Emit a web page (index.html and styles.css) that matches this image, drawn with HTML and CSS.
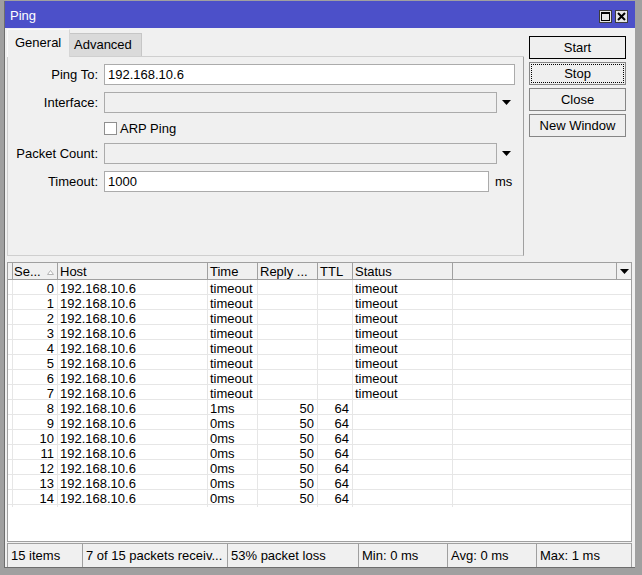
FILE: index.html
```html
<!DOCTYPE html>
<html>
<head>
<meta charset="utf-8">
<title>Ping</title>
<link rel="stylesheet" href="styles.css">
</head>
<body>
<div class="frame">
  <div class="win">
    <div class="titlebar">
      <span class="title">Ping</span>
      <div class="tbtns">
        <span class="tbtn"><svg width="9" height="9" viewBox="0 0 9 9"><rect x="0.5" y="0.5" width="8" height="8" fill="none" stroke="#000"/><rect x="0" y="0" width="9" height="2" fill="#000"/></svg></span>
        <span class="tbtn"><svg width="9" height="9" viewBox="0 0 9 9"><path d="M1 1L8 8M8 1L1 8" stroke="#000" stroke-width="2"/></svg></span>
      </div>
    </div>
    <div class="main">
      <div class="top">
        <div class="tabsarea">
          <div class="tabs">
            <div class="tab active">General</div>
            <div class="tab adv">Advanced</div>
          </div>
          <div class="panel">
            <div class="form">
              <div class="lbl">Ping To:</div>
              <div class="field"><div class="input full">192.168.10.6</div></div>

              <div class="lbl">Interface:</div>
              <div class="field"><div class="input dis"></div><span class="arrow"><svg width="9" height="5" viewBox="0 0 9 5"><path d="M0 0H9L4.5 5Z" fill="#000"/></svg></span></div>

              <div class="lbl"></div>
              <div class="field"><span class="cb"></span><span class="cblbl">ARP Ping</span></div>

              <div class="lbl">Packet Count:</div>
              <div class="field"><div class="input dis"></div><span class="arrow"><svg width="9" height="5" viewBox="0 0 9 5"><path d="M0 0H9L4.5 5Z" fill="#000"/></svg></span></div>

              <div class="lbl">Timeout:</div>
              <div class="field"><div class="input to">1000</div><span class="unit">ms</span></div>
            </div>
          </div>
        </div>
        <div class="buttons">
          <div class="btn default">Start</div>
          <div class="btn focus">Stop</div>
          <div class="btn">Close</div>
          <div class="btn">New Window</div>
        </div>
      </div>

      <div class="grid">
        <div class="hrow">
          <div class="hc"></div>
          <div class="hc sort">Se...<svg class="tri" width="7" height="5" viewBox="0 0 7 5"><path d="M0.5 4.5H6.5L3.5 0.5Z" fill="#fff" stroke="#b4b4b4"/></svg></div>
          <div class="hc">Host</div>
          <div class="hc">Time</div>
          <div class="hc">Reply ...</div>
          <div class="hc">TTL</div>
          <div class="hc">Status</div>
          <div class="hc"></div>
          <div class="hc last"><svg width="9" height="5" viewBox="0 0 9 5"><path d="M0 0H9L4.5 5Z" fill="#000"/></svg></div>
        </div>
        <div class="brow"><div class="bc"></div><div class="bc num">0</div><div class="bc">192.168.10.6</div><div class="bc">timeout</div><div class="bc num"></div><div class="bc num"></div><div class="bc">timeout</div><div class="bc end"></div></div>
        <div class="brow"><div class="bc"></div><div class="bc num">1</div><div class="bc">192.168.10.6</div><div class="bc">timeout</div><div class="bc num"></div><div class="bc num"></div><div class="bc">timeout</div><div class="bc end"></div></div>
        <div class="brow"><div class="bc"></div><div class="bc num">2</div><div class="bc">192.168.10.6</div><div class="bc">timeout</div><div class="bc num"></div><div class="bc num"></div><div class="bc">timeout</div><div class="bc end"></div></div>
        <div class="brow"><div class="bc"></div><div class="bc num">3</div><div class="bc">192.168.10.6</div><div class="bc">timeout</div><div class="bc num"></div><div class="bc num"></div><div class="bc">timeout</div><div class="bc end"></div></div>
        <div class="brow"><div class="bc"></div><div class="bc num">4</div><div class="bc">192.168.10.6</div><div class="bc">timeout</div><div class="bc num"></div><div class="bc num"></div><div class="bc">timeout</div><div class="bc end"></div></div>
        <div class="brow"><div class="bc"></div><div class="bc num">5</div><div class="bc">192.168.10.6</div><div class="bc">timeout</div><div class="bc num"></div><div class="bc num"></div><div class="bc">timeout</div><div class="bc end"></div></div>
        <div class="brow"><div class="bc"></div><div class="bc num">6</div><div class="bc">192.168.10.6</div><div class="bc">timeout</div><div class="bc num"></div><div class="bc num"></div><div class="bc">timeout</div><div class="bc end"></div></div>
        <div class="brow"><div class="bc"></div><div class="bc num">7</div><div class="bc">192.168.10.6</div><div class="bc">timeout</div><div class="bc num"></div><div class="bc num"></div><div class="bc">timeout</div><div class="bc end"></div></div>
        <div class="brow"><div class="bc"></div><div class="bc num">8</div><div class="bc">192.168.10.6</div><div class="bc">1ms</div><div class="bc num">50</div><div class="bc num">64</div><div class="bc"></div><div class="bc end"></div></div>
        <div class="brow"><div class="bc"></div><div class="bc num">9</div><div class="bc">192.168.10.6</div><div class="bc">0ms</div><div class="bc num">50</div><div class="bc num">64</div><div class="bc"></div><div class="bc end"></div></div>
        <div class="brow"><div class="bc"></div><div class="bc num">10</div><div class="bc">192.168.10.6</div><div class="bc">0ms</div><div class="bc num">50</div><div class="bc num">64</div><div class="bc"></div><div class="bc end"></div></div>
        <div class="brow"><div class="bc"></div><div class="bc num">11</div><div class="bc">192.168.10.6</div><div class="bc">0ms</div><div class="bc num">50</div><div class="bc num">64</div><div class="bc"></div><div class="bc end"></div></div>
        <div class="brow"><div class="bc"></div><div class="bc num">12</div><div class="bc">192.168.10.6</div><div class="bc">0ms</div><div class="bc num">50</div><div class="bc num">64</div><div class="bc"></div><div class="bc end"></div></div>
        <div class="brow"><div class="bc"></div><div class="bc num">13</div><div class="bc">192.168.10.6</div><div class="bc">0ms</div><div class="bc num">50</div><div class="bc num">64</div><div class="bc"></div><div class="bc end"></div></div>
        <div class="brow"><div class="bc"></div><div class="bc num">14</div><div class="bc">192.168.10.6</div><div class="bc">0ms</div><div class="bc num">50</div><div class="bc num">64</div><div class="bc"></div><div class="bc end"></div></div>
      </div>

      <div class="status">
        <div class="sc w1">15 items</div>
        <div class="sc w2">7 of 15 packets receiv...</div>
        <div class="sc w3">53% packet loss</div>
        <div class="sc w4">Min: 0 ms</div>
        <div class="sc w5">Avg: 0 ms</div>
        <div class="sc w6">Max: 1 ms</div>
      </div>
    </div>
  </div>
</div>
</body>
</html>
```

FILE: styles.css
```css
body {
  margin: 0;
  font-family: "Liberation Sans", Arial, sans-serif;
  font-size: 13px;
  color: #000;
  background: #a0a0a0;
}

.frame {
  width: 642px;
  height: 575px;
  box-sizing: border-box;
  padding: 1px 7px 7px 4px;
  background: #a0a0a0;
}

.win {
  height: 100%;
  box-sizing: border-box;
  border-left: 1px solid #6e6e6e;
  border-bottom: 1px solid #6e6e6e;
  display: flex;
  flex-direction: column;
}

.titlebar {
  height: 27px;
  flex: none;
  background: #4c50c9;
  display: flex;
  align-items: center;
  padding: 1px 7px 0 5px;
  box-sizing: border-box;
  color: #fff;
}

.title {
  flex: 1;
}

.tbtns {
  display: flex;
  gap: 3px;
  align-self: flex-start;
  margin-top: 8px;
}

.tbtn {
  width: 13px;
  height: 13px;
  box-sizing: border-box;
  border: 1px solid #3c3c3c;
  background: #e6e6e6;
  display: flex;
  align-items: center;
  justify-content: center;
}

.main {
  flex: 1;
  background: #f0f0f0;
  display: flex;
  flex-direction: column;
}

.top {
  display: flex;
  padding: 1px 0 0 2px;
  height: 228px;
  box-sizing: border-box;
}

.tabsarea {
  width: 517px;
}

.tabs {
  display: flex;
  align-items: flex-end;
  height: 27px;
  border-bottom: 1px solid #cfcfcf;
}

.tab {
  box-sizing: border-box;
  white-space: nowrap;
}

.tab.active {
  width: 63px;
  height: 28px;
  margin-bottom: -1px;
  background: #f0f0f0;
  border: 1px solid #d6d6d6;
  border-top-color: #fafafa;
  border-left-color: #fafafa;
  border-bottom: none;
  padding-left: 7px;
  line-height: 26px;
}

.tab.adv {
  width: 72px;
  height: 23px;
  background: #dadada;
  border: 1px solid #c6c6c6;
  border-left: none;
  border-bottom: none;
  padding-left: 4px;
  line-height: 22px;
}

.panel {
  height: 199px;
  box-sizing: border-box;
  border: 1px solid #cfcfcf;
  border-top: none;
  border-right-color: #a0a0a0;
  padding: 7px 7px 0 0;
}

.form {
  display: grid;
  grid-template-columns: 90px 411px;
  grid-template-rows: 21px 21px 16px 21px 21px;
  column-gap: 6px;
  row-gap: 7px;
}

.lbl {
  text-align: right;
  line-height: 21px;
  white-space: nowrap;
}

.field {
  display: flex;
  align-items: center;
}

.input {
  height: 21px;
  box-sizing: border-box;
  border: 1px solid #ababab;
  background: #fff;
  padding-left: 3px;
  line-height: 19px;
}

.input.full {
  width: 411px;
}

.input.dis {
  width: 393px;
  background: #f0f0f0;
}

.input.to {
  width: 385px;
}

.arrow {
  width: 18px;
  display: flex;
  justify-content: center;
}

.unit {
  margin-left: 6px;
}

.cb {
  width: 13px;
  height: 13px;
  box-sizing: border-box;
  border: 1px solid #8f8f8f;
  background: #fff;
}

.cblbl {
  margin-left: 3px;
}

.buttons {
  display: flex;
  flex-direction: column;
  gap: 3px;
  width: 97px;
  margin: 7px 0 0 5px;
}

.btn {
  height: 23px;
  box-sizing: border-box;
  border: 1px solid #868686;
  background: #efefef;
  text-align: center;
  line-height: 22px;
  white-space: nowrap;
}

.btn.default {
  border-color: #000;
}

.btn.focus {
  outline: 1px dotted #000;
  outline-offset: -3px;
}

.grid {
  margin: 6px 0 0 2px;
  width: 625px;
  height: 280px;
  box-sizing: border-box;
  border: 1px solid #a0a0a0;
  background: #fff;
  overflow: hidden;
}

.hrow {
  display: grid;
  grid-template-columns: 5px 45px 150px 50px 60px 35px 100px 164px 14px;
  height: 17px;
  box-sizing: border-box;
  border-bottom: 1px solid #a0a0a0;
  background: #f0f0f0;
}

.hc {
  box-sizing: border-box;
  border-right: 1px solid #a0a0a0;
  padding: 1px 0 0 2px;
  line-height: 16px;
  white-space: nowrap;
}

.hc.sort {
  display: flex;
  align-items: center;
  padding: 1px 0 0 1px;
}

.hc.sort .tri {
  margin-left: auto;
  margin-right: 3px;
}

.hc.last {
  border-right: none;
  display: flex;
  align-items: center;
  justify-content: center;
  padding: 0;
}

.brow {
  display: grid;
  grid-template-columns: 5px 45px 150px 50px 60px 35px 100px 178px;
  height: 15px;
  box-sizing: border-box;
  border-bottom: 1px solid #e6e6e6;
}

.bc {
  box-sizing: border-box;
  border-right: 1px solid #e6e6e6;
  padding: 1px 0 0 2px;
  line-height: 16px;
  white-space: nowrap;
}

.bc.num {
  text-align: right;
  padding: 1px 3px 0 0;
}

.bc.end {
  border-right: none;
}

.status {
  margin: 1px 0 0 2px;
  width: 625px;
  height: 24px;
  box-sizing: border-box;
  border-top: 1px solid #a0a0a0;
  display: flex;
}

.sc {
  box-sizing: border-box;
  border-left: 1px solid #a0a0a0;
  padding-left: 3px;
  line-height: 23px;
  white-space: nowrap;
}

.sc.w1 { width: 75px; }
.sc.w2 { width: 145px; }
.sc.w3 { width: 131px; }
.sc.w4 { width: 89px; }
.sc.w5 { width: 89px; }
.sc.w6 { width: 96px; border-right: 1px solid #a0a0a0; }
```
